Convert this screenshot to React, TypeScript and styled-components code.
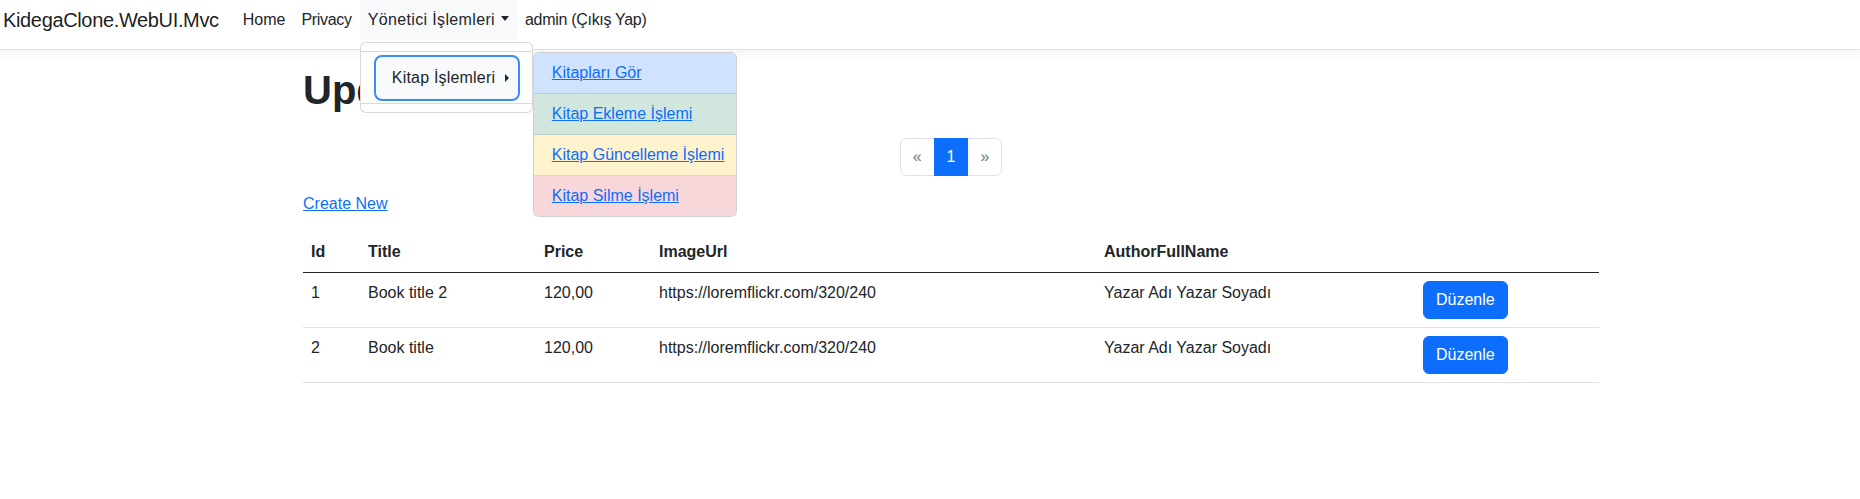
import React from 'react';
import styled, { createGlobalStyle } from 'styled-components';

const GlobalStyle = createGlobalStyle`
  * {
    box-sizing: border-box;
  }
  body {
    margin: 0;
    background: #fff;
    color: #212529;
    font-family: 'Liberation Sans', Arial, sans-serif;
    font-size: 16px;
    line-height: 1.5;
  }
`;

type Book = {
  id: number;
  title: string;
  price: string;
  imageUrl: string;
  author: string;
};

const books: Book[] = [
  { id: 1, title: 'Book title 2', price: '120,00', imageUrl: 'https://loremflickr.com/320/240', author: 'Yazar Adı Yazar Soyadı' },
  { id: 2, title: 'Book title', price: '120,00', imageUrl: 'https://loremflickr.com/320/240', author: 'Yazar Adı Yazar Soyadı' },
];

const subItems = [
  { label: 'Kitapları Gör', tone: 'primary' },
  { label: 'Kitap Ekleme İşlemi', tone: 'success' },
  { label: 'Kitap Güncelleme İşlemi', tone: 'warning' },
  { label: 'Kitap Silme İşlemi', tone: 'danger' },
] as const;

type Tone = (typeof subItems)[number]['tone'];

const toneBg: Record<Tone, string> = {
  primary: '#cfe2ff',
  success: '#d1e7dd',
  warning: '#fff3cd',
  danger: '#f8d7da',
};

const columns = [57, 176, 115, 445, 319, 184];

const App: React.FC = () => {
  return (
    <>
      <GlobalStyle />
      <Header>
        <Nav>
          <Brand href="#">KidegaClone.WebUI.Mvc</Brand>
          <NavList>
            <NavItem>
              <NavLink href="#">Home</NavLink>
            </NavItem>
            <NavItem>
              <NavLink href="#" $tight>Privacy</NavLink>
            </NavItem>
            <NavItem>
              <DropdownToggle href="#">Yönetici İşlemleri</DropdownToggle>
              <DropdownMenu>
                <MenuSection>
                  <SubToggle type="button">
                    Kitap İşlemleri
                    <RightCaret />
                  </SubToggle>
                </MenuSection>
                <SubMenu>
                  {subItems.map((item) => (
                    <SubItem key={item.label} $tone={item.tone}>
                      <SubLink href="#">{item.label}</SubLink>
                    </SubItem>
                  ))}
                </SubMenu>
              </DropdownMenu>
            </NavItem>
            <NavItem>
              <NavLink href="#" $tight>admin (Çıkış Yap)</NavLink>
            </NavItem>
          </NavList>
        </Nav>
      </Header>

      <Container>
        <Title>Update</Title>

        <Pagination>
          <PageItem>
            <PageLink $disabled>«</PageLink>
          </PageItem>
          <PageItem>
            <PageLink $active>1</PageLink>
          </PageItem>
          <PageItem>
            <PageLink $disabled>»</PageLink>
          </PageItem>
        </Pagination>

        <Para>
          <TextLink href="#">Create New</TextLink>
        </Para>

        <Table>
          <colgroup>
            {columns.map((w, i) => (
              <col key={i} style={{ width: w }} />
            ))}
          </colgroup>
          <thead>
            <tr>
              <Th>Id</Th>
              <Th>Title</Th>
              <Th>Price</Th>
              <Th>ImageUrl</Th>
              <Th>AuthorFullName</Th>
              <Th />
            </tr>
          </thead>
          <tbody>
            {books.map((b) => (
              <tr key={b.id}>
                <Td>{b.id}</Td>
                <Td>{b.title}</Td>
                <Td>{b.price}</Td>
                <Td>{b.imageUrl}</Td>
                <Td>{b.author}</Td>
                <Td>
                  <PrimaryButton type="button">Düzenle</PrimaryButton>
                </Td>
              </tr>
            ))}
          </tbody>
        </Table>
      </Container>
    </>
  );
};

export default App;

const Header = styled.header`
  background: #fff;
  border-bottom: 1px solid #dee2e6;
  box-shadow: 0 4px 12px rgba(0, 0, 0, 0.05);
  position: relative;
  z-index: 10;
`;

const Nav = styled.nav`
  display: flex;
  align-items: flex-start;
  height: 49px;
  padding-left: 3px;
`;

const Brand = styled.a`
  font-size: 20px;
  line-height: 30px;
  padding: 5px 0;
  margin-right: 16px;
  color: rgba(0, 0, 0, 0.9);
  text-decoration: none;
  white-space: nowrap;
  letter-spacing: -0.35px;
`;

const NavList = styled.ul`
  display: flex;
  list-style: none;
  margin: 0;
  padding: 0;
`;

const NavItem = styled.li`
  position: relative;
`;

const NavLink = styled.a<{ $tight?: boolean }>`
  display: block;
  padding: 8px;
  color: #212529;
  text-decoration: none;
  white-space: nowrap;
  letter-spacing: ${(p) => (p.$tight ? '-0.3px' : 'normal')};
`;

const DropdownToggle = styled(NavLink)`
  background: #f8f9fa;
  border-radius: 4px;
  letter-spacing: 0.35px;

  &::after {
    content: '';
    display: inline-block;
    margin-left: 6px;
    vertical-align: 4px;
    border-top: 5px solid #212529;
    border-left: 4.5px solid transparent;
    border-right: 4.5px solid transparent;
  }
`;

const DropdownMenu = styled.div`
  position: absolute;
  top: 42px;
  left: 0;
  width: 173px;
  padding: 8px 0;
  background: #fff;
  border: 1px solid rgba(0, 0, 0, 0.15);
  border-radius: 6px;
  z-index: 1000;
`;

const MenuSection = styled.div`
  border-top: 1px solid rgba(0, 0, 0, 0.15);
  border-bottom: 1px solid rgba(0, 0, 0, 0.15);
  padding: 3px 12px 2px 13px;
`;

const SubToggle = styled.button`
  display: flex;
  align-items: center;
  width: 146px;
  height: 46px;
  padding: 0 0 0 16px;
  background: #f8f9fa;
  border: 2px solid #3a8cf4;
  border-radius: 8px;
  color: #212529;
  font-family: inherit;
  font-size: 16px;
  letter-spacing: 0.2px;
  cursor: pointer;
`;

const RightCaret = styled.span`
  margin-left: 10px;
  width: 0;
  height: 0;
  border-left: 4px solid #212529;
  border-top: 4px solid transparent;
  border-bottom: 4px solid transparent;
`;

const SubMenu = styled.ul`
  position: absolute;
  top: 9px;
  left: calc(100% + 1px);
  width: 204px;
  margin: 0;
  padding: 0;
  list-style: none;
  border: 1px solid rgba(0, 0, 0, 0.18);
  border-radius: 6px;
  overflow: hidden;
  background: #fff;
`;

const SubItem = styled.li<{ $tone: Tone }>`
  background: ${(p) => toneBg[p.$tone]};
  padding: 8px 18px;
  line-height: 24px;
  border-bottom: 1px solid rgba(0, 0, 0, 0.1);

  &:last-child {
    border-bottom: none;
  }
`;

const SubLink = styled.a`
  color: #0d6efd;
  text-decoration: underline;
  white-space: nowrap;
`;

const Container = styled.main`
  width: 1320px;
  margin-left: 291px;
  padding: 16px 12px 0;
`;

const Title = styled.h1`
  margin: 0 0 8px;
  font-size: 40px;
  line-height: 1.2;
  font-weight: 700;
`;

const Pagination = styled.ul`
  display: flex;
  justify-content: center;
  list-style: none;
  margin: 24px 0 16px;
  padding: 0;
`;

const PageItem = styled.li`
  margin-left: -1px;

  &:first-child {
    margin-left: 0;
  }
  &:first-child > span {
    border-radius: 6px 0 0 6px;
  }
  &:last-child > span {
    border-radius: 0 6px 6px 0;
  }
`;

const PageLink = styled.span<{ $active?: boolean; $disabled?: boolean }>`
  display: block;
  padding: 6px 12px;
  line-height: 24px;
  font-size: 16px;
  border: 1px solid ${(p) => (p.$active ? '#0d6efd' : '#dee2e6')};
  background: ${(p) => (p.$active ? '#0d6efd' : '#fff')};
  color: ${(p) => (p.$active ? '#fff' : p.$disabled ? '#6c757d' : '#0d6efd')};
  position: relative;
  z-index: ${(p) => (p.$active ? 1 : 0)};
`;

const Para = styled.p`
  margin: 0 0 16px;
`;

const TextLink = styled.a`
  color: #0d6efd;
  text-decoration: underline;
`;

const Table = styled.table`
  width: 100%;
  border-collapse: collapse;
  table-layout: fixed;
`;

const Th = styled.th`
  text-align: left;
  font-weight: 700;
  padding: 8px;
  border-bottom: 1px solid #212529;
  white-space: nowrap;
`;

const Td = styled.td`
  padding: 8px;
  vertical-align: top;
  border-bottom: 1px solid #dee2e6;
  white-space: nowrap;
`;

const PrimaryButton = styled.button`
  display: inline-block;
  padding: 6px 12px;
  font-family: inherit;
  font-size: 16px;
  line-height: 24px;
  color: #fff;
  background: #0d6efd;
  border: 1px solid #0d6efd;
  border-radius: 6px;
  cursor: pointer;
`;
